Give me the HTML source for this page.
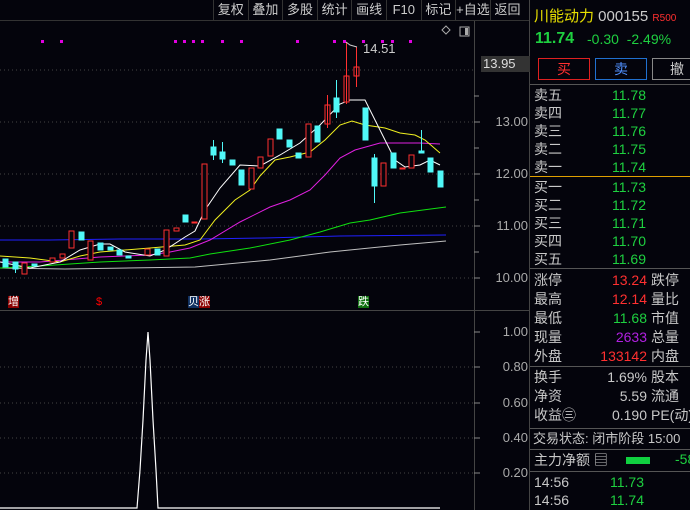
<!DOCTYPE html>
<html><head><meta charset="utf-8"><style>
*{margin:0;padding:0;box-sizing:border-box}
body{width:690px;height:510px;background:#04040c;overflow:hidden;position:relative;font-family:"Liberation Sans","Noto Sans CJK SC",sans-serif;color:#c8c8c8}
.a{position:absolute;white-space:nowrap}
.tb{position:absolute;top:0;left:213px;height:20px;display:flex}
.tb div{width:34.6px;border-left:1px solid #333;font-size:13px;line-height:20px;text-align:center;color:#ccc}
.r{font-size:14px;line-height:18px}
.g{color:#1ed040}.rd{color:#ff3030}
</style></head><body>
<div class="tb"><div>复权</div><div>叠加</div><div>多股</div><div>统计</div><div>画线</div><div>F10</div><div>标记</div><div>+自选</div><div>返回</div></div>
<div class="a" style="left:0;top:20px;width:530px;height:1px;background:#333"></div>
<div class="a" style="left:529px;top:0;width:1px;height:510px;background:#444"></div>
<div class="a" style="left:474px;top:21px;width:1px;height:489px;background:#444"></div>
<div class="a" style="left:0;top:310px;width:530px;height:1px;background:#444"></div>
<svg class="a" style="left:0;top:0" width="530" height="510">
<g stroke="#444" stroke-dasharray="1,3"><line x1="0" y1="70" x2="474" y2="70"/><line x1="0" y1="122" x2="474" y2="122"/><line x1="0" y1="174" x2="474" y2="174"/><line x1="0" y1="226" x2="474" y2="226"/><line x1="0" y1="278" x2="474" y2="278"/>
<line x1="0" y1="367" x2="474" y2="367"/><line x1="0" y1="403" x2="474" y2="403"/><line x1="0" y1="438" x2="474" y2="438"/><line x1="0" y1="473" x2="474" y2="473"/></g>
<g stroke="#888"><line x1="474" y1="96" x2="479" y2="96"/><line x1="474" y1="122" x2="480" y2="122"/><line x1="474" y1="148" x2="479" y2="148"/><line x1="474" y1="174" x2="480" y2="174"/><line x1="474" y1="200" x2="479" y2="200"/><line x1="474" y1="226" x2="480" y2="226"/><line x1="474" y1="252" x2="479" y2="252"/><line x1="474" y1="278" x2="480" y2="278"/>
<line x1="474" y1="332" x2="480" y2="332"/><line x1="474" y1="367" x2="480" y2="367"/><line x1="474" y1="403" x2="480" y2="403"/><line x1="474" y1="438" x2="480" y2="438"/><line x1="474" y1="473" x2="480" y2="473"/></g>
<g fill="#e000e0"><rect x="41" y="40" width="3" height="3"/><rect x="60" y="40" width="3" height="3"/><rect x="174" y="40" width="3" height="3"/><rect x="183" y="40" width="3" height="3"/><rect x="192" y="40" width="3" height="3"/><rect x="201" y="40" width="3" height="3"/><rect x="221" y="40" width="3" height="3"/><rect x="240" y="40" width="3" height="3"/><rect x="296" y="40" width="3" height="3"/><rect x="333" y="40" width="3" height="3"/><rect x="343" y="40" width="3" height="3"/><rect x="362" y="40" width="3" height="3"/><rect x="381" y="40" width="3" height="3"/><rect x="391" y="40" width="3" height="3"/><rect x="409" y="40" width="3" height="3"/></g>
<g fill="none" stroke-width="1">
<polyline stroke="#c0c0c0" points="0,268 65,269 195,267 270,260 330,252 400,245 446,241"/>
<polyline stroke="#2020ff" points="0,240 50,240 120,239 200,239 265,238 340,236 446,235"/>
<polyline stroke="#10e010" points="0,268 40,266 100,262 150,260 190,258 210,254 250,248 290,240 320,232 350,223 370,220 400,213 446,207"/>
<polyline stroke="#e020e0" points="0,262 40,262 100,257 150,255 170,252 190,248 210,240 240,222 270,207 290,200 310,190 325,175 340,158 355,150 380,143 420,143 440,144"/>
<polyline stroke="#f0f020" points="0,256 30,258 60,262 80,256 100,252 150,248 185,245 200,240 215,220 235,200 250,190 260,176 275,160 290,157 310,152 325,140 340,125 352,121 365,125 385,128 400,133 415,135 425,140 440,153"/>
<polyline stroke="#ffffff" points="0,262 30,268 60,262 80,250 100,244 110,244 125,252 150,256 165,250 185,237 195,231 205,210 220,188 240,165 260,166 280,155 300,143 320,125 340,104 350,100 365,100 385,140 395,160 405,167 420,165 430,160 440,165"/>
</g>
<g stroke="#ff3030" fill="#04040c">
<rect x="22" y="263" width="5" height="11"/><rect x="50" y="258" width="5" height="4"/><rect x="60" y="254" width="5" height="4"/><rect x="69" y="231" width="5" height="17"/><rect x="88" y="241" width="5" height="19"/><rect x="145" y="249" width="5" height="6"/><rect x="164" y="230" width="5" height="26"/><rect x="174" y="228" width="5" height="3"/><rect x="192" y="222" width="5" height="1"/><rect x="202" y="164" width="5" height="55"/><rect x="249" y="168" width="5" height="21"/><rect x="258" y="157" width="5" height="11"/><line x1="270.5" y1="152" x2="270.5" y2="139"/><rect x="268" y="139" width="5" height="17"/><rect x="306" y="124" width="5" height="33"/><rect x="325" y="105" width="5" height="19"/><line x1="327.5" y1="95" x2="327.5" y2="128"/><rect x="344" y="76" width="5" height="26"/><line x1="346.5" y1="42" x2="346.5" y2="104"/><rect x="354" y="67" width="5" height="9"/><line x1="356.5" y1="47" x2="356.5" y2="87"/><rect x="381" y="163" width="5" height="23"/><rect x="400" y="168" width="5" height="1"/><rect x="409" y="155" width="5" height="13"/>
</g>
<g fill="#50f8f8" stroke="#50f8f8">
<rect x="3" y="259" width="5" height="8"/><rect x="13" y="262" width="5" height="7"/><line x1="15.5" y1="262" x2="15.5" y2="273"/><rect x="32" y="264" width="5" height="2"/><rect x="79" y="232" width="5" height="8"/><rect x="98" y="243" width="5" height="7"/><rect x="108" y="247" width="5" height="3"/><rect x="117" y="250" width="5" height="5"/><rect x="126" y="256" width="5" height="2"/><rect x="155" y="249" width="5" height="6"/><rect x="183" y="215" width="5" height="7"/><rect x="211" y="147" width="5" height="8"/><line x1="213.5" y1="140" x2="213.5" y2="160"/><rect x="220" y="152" width="5" height="7"/><line x1="222.5" y1="142" x2="222.5" y2="163"/><rect x="230" y="160" width="5" height="5"/><rect x="239" y="170" width="5" height="15"/><rect x="277" y="129" width="5" height="10"/><rect x="287" y="140" width="5" height="7"/><rect x="296" y="153" width="5" height="5"/><rect x="315" y="126" width="5" height="16"/><rect x="334" y="98" width="5" height="14"/><line x1="336.5" y1="80" x2="336.5" y2="118"/><rect x="363" y="108" width="5" height="32"/><rect x="372" y="158" width="5" height="28"/><line x1="374.5" y1="154" x2="374.5" y2="203"/><rect x="391" y="153" width="5" height="15"/><rect x="419" y="151" width="5" height="2"/><line x1="421.5" y1="130" x2="421.5" y2="152"/><rect x="428" y="158" width="5" height="14"/><rect x="438" y="171" width="5" height="16"/>
</g>
<polyline fill="none" stroke="#ccc" points="346,42 350,45 357,47"/>
<text x="363" y="53" fill="#ccc" font-size="13" font-family="Liberation Sans">14.51</text>
<polyline fill="none" stroke="#fff" stroke-width="1.2" points="0,508 137,508 140,470 143,420 146,360 148,332 150,360 153,420 156,470 158,508 440,508"/>
<rect x="460" y="27" width="9" height="9" fill="none" stroke="#aaa"/><rect x="465" y="28" width="3" height="7" fill="#aaa"/>
<path d="M446 26 l4 4 -4 4 -4 -4z" fill="none" stroke="#aaa"/>
</svg>
<div class="a" style="left:481px;top:56px;width:49px;height:16px;background:#333;color:#ddd;font-size:13px;line-height:16px;padding-left:2px">13.95</div>
<div class="a" style="left:480px;top:0;width:48px;font-size:13px;color:#aaa;text-align:right">
<div class="a" style="right:0;top:114px">13.00</div><div class="a" style="right:0;top:166px">12.00</div><div class="a" style="right:0;top:218px">11.00</div><div class="a" style="right:0;top:270px">10.00</div>
<div class="a" style="right:0;top:324px">1.00</div><div class="a" style="right:0;top:359px">0.80</div><div class="a" style="right:0;top:395px">0.60</div><div class="a" style="right:0;top:430px">0.40</div><div class="a" style="right:0;top:465px">0.20</div></div>
<div class="a" style="left:8px;top:296px;background:#8a0000;color:#fff;font-size:11px;line-height:12px">增</div>
<div class="a" style="left:96px;top:296px;color:#f00;font-size:11px;line-height:12px">$</div>
<div class="a" style="left:188px;top:296px;font-size:11px;line-height:12px"><span style="background:#103060;color:#fff">贝</span><span style="background:#8a0000;color:#fff">涨</span></div>
<div class="a" style="left:358px;top:296px;background:#107010;color:#fff;font-size:11px;line-height:12px">跌</div>
<!-- right panel -->
<div class="a" style="left:534px;top:5px;font-size:15px;color:#e8e000">川能动力 <span style="color:#ccc">000155</span> <span style="color:#ff3030;font-size:10px">R500</span></div>
<div class="a g" style="left:535px;top:30px;font-size:16px;font-weight:bold">11.74</div>
<div class="a g" style="left:587px;top:31px;font-size:14px">-0.30&nbsp;&nbsp;-2.49%</div>
<div class="a" style="left:538px;top:58px;width:52px;height:22px;border:1px solid #e02020;color:#ff3030;font-size:14px;text-align:center;line-height:20px">买</div>
<div class="a" style="left:595px;top:58px;width:52px;height:22px;border:1px solid #2070d0;color:#5090ff;font-size:14px;text-align:center;line-height:20px">卖</div>
<div class="a" style="left:652px;top:58px;width:50px;height:22px;border:1px solid #888;color:#ccc;font-size:14px;text-align:center;line-height:20px">撤</div>
<div class="a" style="left:530px;top:84px;width:160px;height:1px;background:#555"></div>
<div class="a r" style="left:534px;top:86px">卖五<br>卖四<br>卖三<br>卖二<br>卖一</div>
<div class="a r g" style="left:612px;top:86px">11.78<br>11.77<br>11.76<br>11.75<br>11.74</div>
<div class="a" style="left:530px;top:176px;width:160px;height:1px;background:#e0a000"></div>
<div class="a r" style="left:534px;top:178px">买一<br>买二<br>买三<br>买四<br>买五</div>
<div class="a r g" style="left:612px;top:178px">11.73<br>11.72<br>11.71<br>11.70<br>11.69</div>
<div class="a" style="left:530px;top:268px;width:160px;height:1px;background:#555"></div>
<div class="a" style="left:534px;top:271px;font-size:14px;line-height:19px">涨停<br>最高<br>最低<br>现量<br>外盘</div>
<div class="a" style="left:590px;top:271px;width:57px;text-align:right;font-size:14px;line-height:19px"><span class="rd">13.24</span><br><span class="rd">12.14</span><br><span class="g">11.68</span><br><span style="color:#b020e0">2633</span><br><span class="rd">133142</span></div>
<div class="a" style="left:651px;top:271px;font-size:14px;line-height:19px">跌停<br>量比<br>市值<br>总量<br>内盘</div>
<div class="a" style="left:530px;top:366px;width:160px;height:1px;background:#555"></div>
<div class="a" style="left:534px;top:368px;font-size:14px;line-height:19px">换手<br>净资<br>收益㊂</div>
<div class="a" style="left:590px;top:368px;width:57px;text-align:right;font-size:14px;line-height:19px">1.69%<br>5.59<br>0.190</div>
<div class="a" style="left:651px;top:368px;font-size:14px;line-height:19px">股本<br>流通<br>PE(动)</div>
<div class="a" style="left:530px;top:428px;width:160px;height:1px;background:#555"></div>
<div class="a" style="left:533px;top:430px;font-size:13px;line-height:18px">交易状态: 闭市阶段 15:00</div>
<div class="a" style="left:530px;top:449px;width:160px;height:1px;background:#555"></div>
<div class="a" style="left:534px;top:451px;font-size:14px;line-height:18px">主力净额 ▤</div>
<div class="a" style="left:626px;top:457px;width:24px;height:7px;background:#10d040"></div>
<div class="a g" style="left:675px;top:451px;font-size:14px">-58</div>
<div class="a" style="left:530px;top:471px;width:160px;height:1px;background:#555"></div>
<div class="a" style="left:534px;top:473px;font-size:14px;line-height:18px">14:56<br>14:56</div>
<div class="a g" style="left:610px;top:473px;font-size:14px;line-height:18px">11.73<br>11.74</div>
</body></html>
